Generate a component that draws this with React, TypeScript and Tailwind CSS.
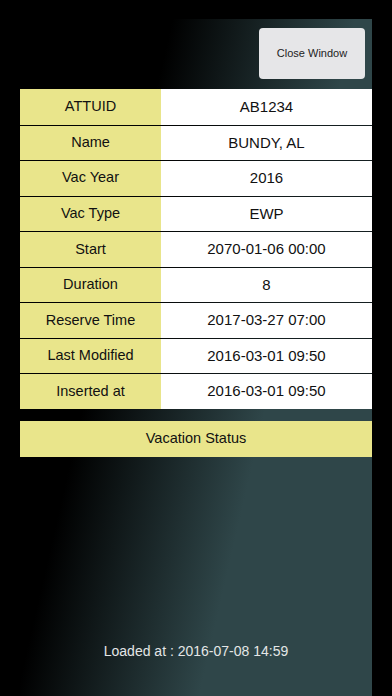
import React from 'react'

const rows: [string, string][] = [
  ['ATTUID', 'AB1234'],
  ['Name', 'BUNDY, AL'],
  ['Vac Year', '2016'],
  ['Vac Type', 'EWP'],
  ['Start', '2070-01-06 00:00'],
  ['Duration', '8'],
  ['Reserve Time', '2017-03-27 07:00'],
  ['Last Modified', '2016-03-01 09:50'],
  ['Inserted at', '2016-03-01 09:50'],
]

export default function App() {
  return (
    <div
      className="w-[392px] h-[696px] bg-black px-[20px] pt-[19px] overflow-hidden"
      style={{ fontFamily: '"Liberation Sans", Arial, sans-serif' }}
    >
      <div className="h-full flex flex-col bg-[linear-gradient(103deg,#000_30%,#2f4649_66%)]">
        {/* close button */}
        <div className="flex justify-end pt-[9px] pr-[7px]">
          <button className="w-[106px] h-[51px] rounded-[4px] bg-[#e6e6e8] text-[11px] text-[#222]">
            Close Window
          </button>
        </div>

        {/* detail table */}
        <div className="mt-[10px] flex flex-col">
          {rows.map(([label, value], i) => (
            <div
              key={label}
              className={`flex h-[35.55px] ${i > 0 ? 'border-t-[1.3px] border-black/55' : ''}`}
            >
              <div className="w-[141px] flex items-center justify-center bg-[#e9e58b] text-[14.5px] text-[#111]">
                {label}
              </div>
              <div className="flex-1 flex items-center justify-center bg-white text-[15px] text-[#111]">
                {value}
              </div>
            </div>
          ))}
        </div>

        <div className="mt-[12px] h-[36px] flex items-center justify-center bg-[#e9e58b] text-[14.5px] text-[#111]">
          Vacation Status
        </div>

        <div className="mt-auto mb-[34px] text-center text-[14px] text-[#e4e6e6]">
          Loaded at : 2016-07-08 14:59
        </div>
      </div>
    </div>
  )
}
